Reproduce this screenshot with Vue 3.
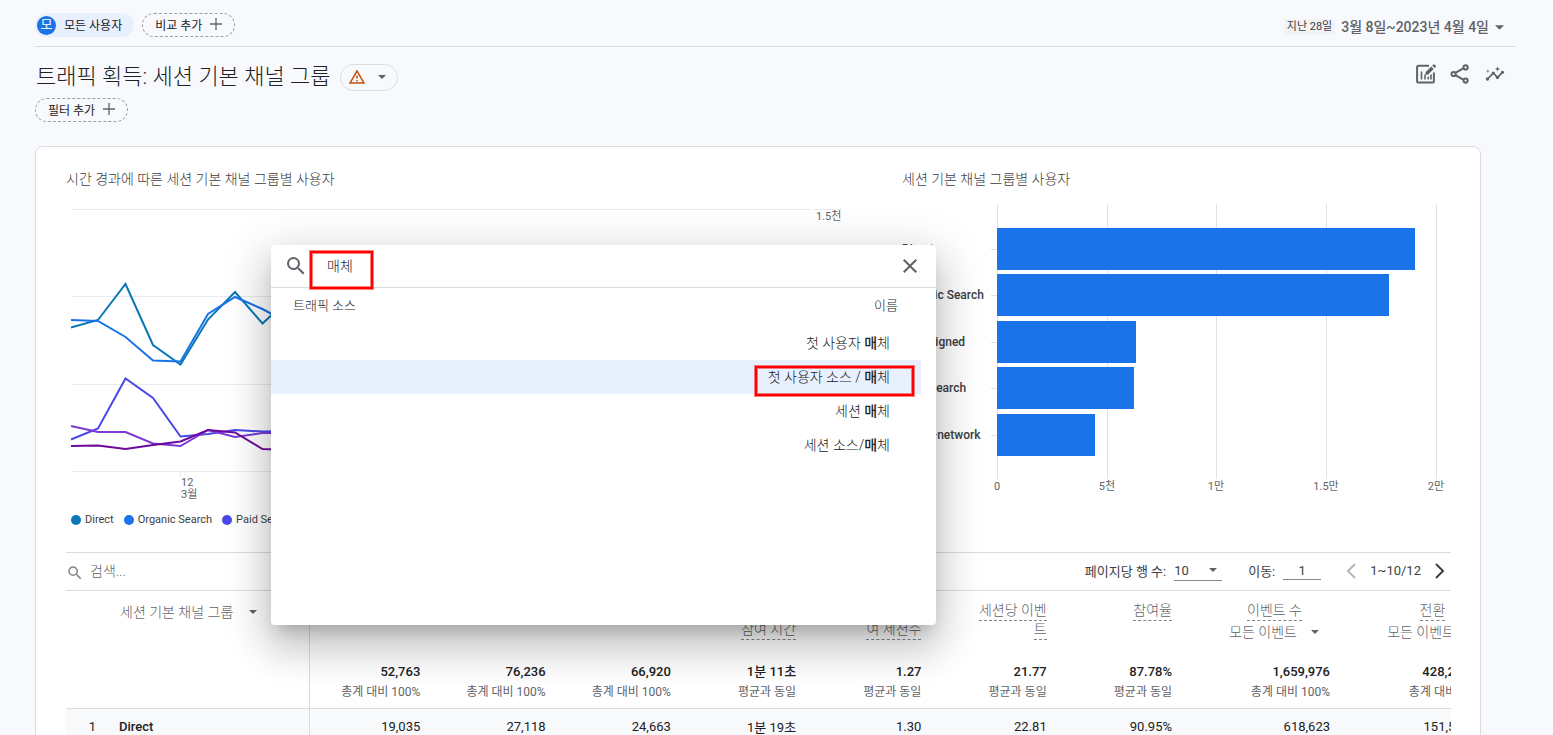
<script setup>
import { ref } from 'vue'

const query = ref('매체')
const tableQuery = ref('')
const goTo = ref('1')
const pageSize = ref('10')

const series = [
  { color: '#0b78b5', points: '5,123.5 32,116 59.5,80 87,141 114.5,160.5 142,115.5 169,88 196.5,119.5 224,94' },
  { color: '#1a73e8', points: '5,116 32,117 59.5,133 87,156.5 114.5,157.5 142,110 169,93 196.5,105 224,120' },
  { color: '#4a48e8', points: '5,235.5 32,224.5 59.5,174.5 87,194 114.5,232.5 142,230 169,226 196.5,227.5 224,227' },
  { color: '#7b3ad6', points: '5,222 32,228 59.5,228 87,239.5 114.5,242 142,226 169,233 196.5,229 224,229' },
  { color: '#6c0a9c', points: '5,242 32,241.5 59.5,245 87,241 114.5,237.5 142,226 169,228.5 196.5,245 224,246' },
]
const legend = [
  { name: 'Direct', color: '#0b78b5' },
  { name: 'Organic Search', color: '#1a73e8' },
  { name: 'Paid Search', color: '#4a48e8' },
]
const bars = [
  { name: 'Direct', y: 24, w: 418 },
  { name: 'Organic Search', y: 70, w: 392 },
  { name: 'Unassigned', y: 117, w: 139 },
  { name: 'Paid Search', y: 163, w: 137 },
  { name: 'Cross-network', y: 210, w: 98 },
]
const ticks = [
  { x: 95, label: '0' },
  { x: 205, label: '5천' },
  { x: 314, label: '1만' },
  { x: 424, label: '1.5만' },
  { x: 534, label: '2만' },
]
const columns = [
  { head: ['사용자'], total: '52,763', note: '총계 대비 100%', first: '19,035' },
  { head: ['세션수'], total: '76,236', note: '총계 대비 100%', first: '27,118' },
  { head: ['참여 세션수'], total: '66,920', note: '총계 대비 100%', first: '24,663' },
  { head: ['세션당 평균', '참여 시간'], total: '1분 11초', note: '평균과 동일', first: '1분 19초' },
  { head: ['사용자당 참', '여 세션수'], total: '1.27', note: '평균과 동일', first: '1.30' },
  { head: ['세션당 이벤', '트'], total: '21.77', note: '평균과 동일', first: '22.81' },
  { head: ['참여율'], total: '87.78%', note: '평균과 동일', first: '90.95%' },
  { head: ['이벤트 수'], filter: true, total: '1,659,976', note: '총계 대비 100%', first: '618,623' },
  { head: ['전환'], filter: true, total: '428,276.00', note: '총계 대비 100%', first: '151,561.00' },
]
const results = [
  { text: '첫 사용자 ' },
  { text: '첫 사용자 소스 / ', active: true },
  { text: '세션 ' },
  { text: '세션 소스/' },
]
</script>

<template>
  <div class="page">
    <header class="topbar">
      <button class="chip all"><span class="avatar">모</span>모든 사용자</button>
      <button class="chip dashed">비교 추가
        <svg class="plus" viewBox="0 0 12 12"><path d="M6 0v12M0 6h12" /></svg>
      </button>
      <button class="date">
        <span class="badge">지난 28일</span>
        <span class="range">3월 8일~2023년 4월 4일</span>
        <svg class="caret" viewBox="0 0 10 5"><path d="M0 0h10L5 5z" /></svg>
      </button>
    </header>

    <div class="heading">
      <h1>트래픽 획득: 세션 기본 채널 그룹</h1>
      <button class="warn" aria-label="데이터 품질">
        <svg class="tri" viewBox="0 0 24 24"><path d="M12 5.99 19.53 19H4.47L12 5.99M12 2 1 21h22L12 2zm1 14h-2v2h2v-2zm0-6h-2v4h2v-4z" /></svg>
        <svg class="caret" viewBox="0 0 10 5"><path d="M0 0h10L5 5z" /></svg>
      </button>
      <div class="actions">
        <button aria-label="맞춤설정">
          <svg viewBox="0 0 20 20"><path d="M13 1.8H2.2A1.1 1.1 0 0 0 1.1 3v14.500a1.100 1.100 0 0 0 1.100 1.100h14.600a1.100 1.100 0 0 0 1.100-1.100V8.500" class="s" /><path d="M5.500 7.500v8M9 10.500v5M12.300 12.500v3M15 10.500v5" class="s thin" /><path d="M9.500 10.700V8.300L15.300 2.500l2.400 2.400-5.800 5.800zM16.200 1.600l1.200-1.200c.3-.3.700-.3 1 0l1.400 1.400c.3.300.3.700 0 1l-1.200 1.200z" /></svg>
        </button>
        <button aria-label="공유">
          <svg viewBox="0 0 20 20"><path d="M5 9.200 13.200 4.400M5 10.900l8.200 4.800" class="s" /><circle cx="3.600" cy="10" r="2.100" class="s" /><circle cx="15.600" cy="3.400" r="2.100" class="s" /><circle cx="15.600" cy="16.600" r="2.100" class="s" /></svg>
        </button>
        <button aria-label="통계">
          <svg class="wide" viewBox="0 0 24 24"><path d="M21 8c-1.450 0-2.260 1.440-1.930 2.510l-3.550 3.560c-.3-.09-.74-.09-1.040 0l-2.550-2.550C12.270 10.450 11.460 9 10 9c-1.450 0-2.270 1.440-1.930 2.520l-4.560 4.550C2.440 15.740 1 16.550 1 18c0 1.100.9 2 2 2 1.450 0 2.260-1.440 1.930-2.510l4.550-4.560c.3.090.74.090 1.040 0l2.550 2.550C12.730 16.550 13.540 18 15 18c1.450 0 2.270-1.440 1.930-2.520l3.560-3.550C21.560 12.260 23 11.450 23 10c0-1.100-.9-2-2-2zM15 9l.94-2.070L18 6l-2.060-.93L15 3l-.92 2.070L12 6l2.080.93zM3.500 11 4 9l2-.5L4 8l-.5-2L3 8l-2 .5L3 9z" /></svg>
        </button>
      </div>
    </div>
    <div class="filters">
      <button class="chip dashed">필터 추가
        <svg class="plus" viewBox="0 0 12 12"><path d="M6 0v12M0 6h12" /></svg>
      </button>
    </div>

    <main class="card">
      <section class="charts">
        <div>
          <h2>시간 경과에 따른 세션 기본 채널 그룹별 사용자</h2>
          <svg class="chart" viewBox="0 0 836 300">
            <path class="grid" d="M5 5.500H744M748 5.500h28M5 92.500H744M5 180.500H744M5 267.500H744M114.500 267v6" />
            <polyline v-for="s in series" :key="s.color" :points="s.points" :stroke="s.color" class="line" />
            <text x="750" y="16" class="axis">1.5천</text>
            <text x="115" y="282" class="axis">12</text>
            <text x="115" y="294" class="axis">3월</text>
          </svg>
          <ul class="legend">
            <li v-for="l in legend" :key="l.name">
              <svg viewBox="0 0 10 10"><circle cx="5" cy="5" r="5" :fill="l.color" /></svg>{{ l.name }}
            </li>
          </ul>
        </div>
        <div>
          <h2>세션 기본 채널 그룹별 사용자</h2>
          <svg class="chart" viewBox="0 0 549 300">
            <path v-for="t in ticks" :key="t.x" class="grid dark" :d="`M${t.x + 0.5} 0V275`" />
            <g v-for="b in bars" :key="b.name">
              <path class="grid dark" :d="`M89 ${b.y + 21.5}h6`" />
              <rect x="95" :y="b.y" :width="b.w" height="42" fill="#1a73e8" />
              <text x="0" :y="b.y + 25" class="cat">{{ b.name }}</text>
            </g>
            <text v-for="t in ticks" :key="t.label" :x="t.x" y="286" class="axis mid">{{ t.label }}</text>
          </svg>
        </div>
      </section>

      <div class="toolbar">
        <label class="find">
          <svg viewBox="0 0 24 24"><path d="M15.500 14h-.79l-.28-.27A6.471 6.471 0 0 0 16 9.500 6.500 6.500 0 1 0 9.500 16c1.610 0 3.090-.59 4.230-1.570l.27.28v.79l5 4.990L20.490 19l-4.990-5zm-6 0C7.010 14 5 11.990 5 9.500S7.010 5 9.500 5 14 7.010 14 9.500 11.990 14 9.500 14z" /></svg>
          <input v-model="tableQuery" placeholder="검색..." aria-label="검색" />
        </label>
        <label class="size">페이지당 행 수:
          <span class="pick">
            <select v-model="pageSize"><option>10</option><option>25</option></select>
            <svg class="caret" viewBox="0 0 10 5"><path d="M0 0h10L5 5z" /></svg>
          </span>
        </label>
        <label class="goto">이동: <input v-model="goTo" /></label>
        <div class="pager">
          <button class="off" aria-label="이전"><svg viewBox="0 0 10 16"><path d="M9 1 2 8l7 7" /></svg></button>
          <span>1~10/12</span>
          <button aria-label="다음"><svg viewBox="0 0 10 16"><path d="m1 1 7 7-7 7" /></svg></button>
        </div>
      </div>

      <div class="scroller">
        <table>
          <colgroup><col class="c-dim" /><col v-for="n in 7" :key="n" /><col class="c-wide" /><col class="c-wide" /></colgroup>
          <thead>
            <tr>
              <th class="dim">
                <button class="dimbtn">세션 기본 채널 그룹 <svg class="caret" viewBox="0 0 10 5"><path d="M0 0h10L5 5z" /></svg></button>
              </th>
              <th v-for="c in columns" :key="c.total" :class="{ filtered: c.filter }">
                <div v-for="h in c.head" :key="h" class="hline"><span>{{ h }}</span></div>
                <button v-if="c.filter" class="evt">모든 이벤트 <svg class="caret" viewBox="0 0 10 5"><path d="M0 0h10L5 5z" /></svg></button>
              </th>
            </tr>
          </thead>
          <tbody>
            <tr class="totals">
              <td class="dim"></td>
              <td v-for="c in columns" :key="c.total"><strong>{{ c.total }}</strong><small>{{ c.note }}</small></td>
            </tr>
            <tr class="row">
              <td class="dim"><span class="idx">1</span><b>Direct</b></td>
              <td v-for="c in columns" :key="c.total">{{ c.first }}</td>
            </tr>
          </tbody>
        </table>
      </div>
    </main>

    <div class="dialog" role="dialog" aria-label="측정기준 선택">
      <div class="dsearch">
        <svg viewBox="0 0 24 24"><path d="M15.500 14h-.79l-.28-.27A6.471 6.471 0 0 0 16 9.500 6.500 6.500 0 1 0 9.500 16c1.610 0 3.090-.59 4.230-1.570l.27.28v.79l5 4.990L20.490 19l-4.990-5zm-6 0C7.010 14 5 11.990 5 9.500S7.010 5 9.500 5 14 7.010 14 9.500 11.990 14 9.500 14z" /></svg>
        <input v-model="query" aria-label="항목 검색" />
        <button aria-label="닫기"><svg viewBox="0 0 24 24"><path d="M19 6.410 17.590 5 12 10.590 6.410 5 5 6.410 10.590 12 5 17.590 6.410 19 12 13.410 17.590 19 19 17.590 13.410 12z" /></svg></button>
      </div>
      <div class="dhead"><span>트래픽 소스</span><span>이름</span></div>
      <ul class="results">
        <li v-for="r in results" :key="r.text">
          <button :class="{ active: r.active }">{{ r.text }}<b>매</b>체</button>
        </li>
      </ul>
      <span class="mark mark-query"></span>
      <span class="mark mark-item"></span>
    </div>
  </div>
</template>

<style>
html, body { height: 100%; overflow: hidden; background: #f8f9fc; }
</style>

<style scoped>
.page {
  position: relative;
  height: 100vh;
  overflow: hidden;
  background: #f8f9fc;
  color: #202124;
  font-family: Roboto, "Noto Sans CJK KR", sans-serif;
  font-size: 14px;
  box-sizing: border-box;
}
button, input, select { font: inherit; color: inherit; border: 0; padding: 0; margin: 0; background: none; outline: 0; }
button { cursor: pointer; }
ul { list-style: none; margin: 0; padding: 0; }
svg { display: block; flex: none; }
.caret { width: 8px; height: 4px; fill: #5f6368; }

.topbar {
  display: flex;
  align-items: center;
  gap: 8px;
  height: 46px;
  margin: 0 37px 0 35px;
  border-bottom: 1px solid #dadce0;
}
.chip {
  display: flex;
  align-items: center;
  box-sizing: border-box;
  height: 24px;
  margin-top: 4px;
  border-radius: 12px;
  font-size: 12px;
}
.all { gap: 8px; padding: 0 12px 2px 2px; background: #e8f0fe; }
.avatar {
  width: 19px;
  height: 19px;
  margin-top: 2px;
  border-radius: 50%;
  background: #1a73e8;
  color: #fff;
  font-size: 13px;
  line-height: 18px;
  text-align: center;
}
.dashed { gap: 8px; padding: 0 12px 2px; border: 1px dashed #9aa0a6; }
.plus { width: 12px; height: 12px; stroke: #5f6368; stroke-width: 1.3; fill: none; }
.date { display: flex; align-items: center; gap: 6px; margin: 8px 12px 0 auto; color: #5f6368; }
.date .caret { width: 9px; height: 5px; }
.badge { padding: 0 3px; background: #f1f3f4; color: #3c4043; font-size: 11px; line-height: 16px; }
.range { font-weight: 500; line-height: 20px; }

.heading { display: flex; align-items: center; height: 30px; margin: 15px 47px 0 36px; }
h1 { margin: 0; font-size: 22px; font-weight: 300; line-height: 30px; }
.warn {
  display: flex;
  align-items: center;
  gap: 12px;
  box-sizing: border-box;
  height: 27px;
  margin-left: 9px;
  padding: 0 11px 0 7px;
  border: 1px solid #dadce0;
  border-radius: 14px;
}
.tri { width: 18px; height: 18px; fill: #c5500a; }
.actions { display: flex; gap: 14px; margin-left: auto; margin-top: -7px; }
.actions svg { width: 20px; height: 20px; fill: #5f6368; }
.actions svg.wide { width: 22px; height: 20px; }
.actions .s { fill: none; stroke: #5f6368; stroke-width: 2; }
.actions .thin { stroke-width: 1.6; }
.filters { display: flex; margin: 2px 35px 0; }

.card {
  margin: 24px 72px 0 35px;
  padding: 22px 29px 0 30px;
  border: 1px solid #dadce0;
  border-radius: 8px;
  background: #fff;
}
.charts { display: grid; grid-template-columns: 836fr 549fr; height: 383px; }
h2 { margin: 0 0 15px; color: #3c4043; font-size: 14px; font-weight: 300; line-height: 20px; }
.chart { width: 100%; }
.grid { stroke: #e8eaed; stroke-width: 1; fill: none; }
.grid.dark { stroke: #dfe1e3; }
.line { fill: none; stroke-width: 2; }
.axis { fill: #5f6368; font-size: 11px; }
.mid { text-anchor: middle; }
.cat { fill: #3c4043; font-size: 12px; font-weight: 500; }
.legend { display: flex; gap: 10px; padding: 6px 0 0 5px; color: #3c4043; font-size: 11px; line-height: 20px; }
.legend li { display: flex; align-items: center; gap: 4px; }
.legend svg { width: 10px; height: 10px; }

.toolbar {
  display: flex;
  align-items: center;
  height: 35px;
  padding-bottom: 2px;
  border-top: 1px solid #dadce0;
  border-bottom: 1px solid #dadce0;
  color: #3c4043;
  font-size: 13px;
}
.find { display: flex; align-items: center; gap: 6px; margin-right: auto; }
.find svg { width: 18px; height: 18px; margin-top: 4px; fill: #80868b; }
.find input { width: 140px; font-size: 14px; font-weight: 300; }
.find input::placeholder { color: #5f6368; opacity: 1; }
.size, .goto { display: flex; align-items: center; gap: 8px; white-space: nowrap; }
.pick { display: flex; align-items: center; width: 48px; height: 19px; border-bottom: 1px solid #80868b; }
.pick select { appearance: none; flex: 1; min-width: 0; }
.pick .caret { margin-right: 5px; }
.goto { margin-left: 26px; }
.goto input { width: 38px; height: 18px; border-bottom: 1px solid #80868b; text-align: center; }
.pager { display: flex; align-items: center; gap: 14px; margin: 0 6px 0 25px; }
.pager svg { width: 10px; height: 16px; fill: none; stroke: #3c4043; stroke-width: 2; }
.pager .off svg { stroke: #b5b8bb; }

.scroller { overflow: hidden; }
table { table-layout: fixed; width: calc(100% + 52px); border-collapse: separate; border-spacing: 0; }
.c-dim { width: 244px; }
.c-wide { width: 158px; }
th { height: 53px; padding: 10px 15px 0; vertical-align: top; text-align: right; color: #5f6368; font-weight: 300; white-space: nowrap; }
td { padding: 0 15px; text-align: right; font-size: 13px; white-space: nowrap; }
.dim { border-right: 1px solid #dadce0; text-align: left; }
th.dim { padding-left: 54px; padding-top: 11px; }
.dimbtn, .evt { display: inline-flex; align-items: center; gap: 16px; line-height: 20px; }
.hline { height: 19px; line-height: 19px; }
.hline span { display: inline-block; height: 19px; border-bottom: 1px dashed #80868b; }
.filtered { padding-right: 26px; padding-left: 0; text-align: center; }
.filtered .hline { padding-left: 43px; }
.filtered .evt { float: right; gap: 14px; margin-top: 2px; }
.totals td { height: 53px; vertical-align: top; border-bottom: 1px solid #dadce0; }
strong { display: block; padding-top: 7px; font-weight: 500; line-height: 20px; }
small { display: block; color: #5f6368; font-size: 12px; line-height: 20px; }
.row td { height: 34px; background: #f8f9fb; }
td.dim { padding-left: 8px; }
.idx { display: inline-block; width: 30px; padding-left: 7px; margin-right: 15px; text-align: center; box-sizing: border-box; }
.row b { font-weight: 500; }

.dialog {
  position: absolute;
  left: 271px;
  top: 245px;
  width: 665px;
  height: 380px;
  border-radius: 4px;
  background: #fff;
  box-shadow: 0 11px 15px -7px rgba(0, 0, 0, .2), 0 24px 38px 3px rgba(0, 0, 0, .14), 0 9px 46px 8px rgba(0, 0, 0, .12);
}
.dsearch { display: flex; align-items: center; height: 42px; padding: 0 14px 0 13px; border-bottom: 1px solid #dadce0; }
.dsearch svg { width: 24px; height: 24px; fill: #5f6368; }
.dsearch input { flex: 1; min-width: 0; margin-left: 19px; padding-bottom: 2px; font-weight: 300; }
.dhead { display: flex; justify-content: space-between; padding: 7px 38px 0 22px; font-size: 13px; font-weight: 300; line-height: 22px; }
.results { padding-top: 9px; }
.results button { display: block; width: 650px; height: 34px; padding: 0 31px 3px 0; text-align: right; font-weight: 300; }
.results .active { background: #e8f0fe; }
.results b { font-weight: 500; }
.mark { position: absolute; border: 2px solid #f00; box-shadow: 0 0 0 1px rgba(255, 0, 0, .5), inset 0 0 0 1px rgba(255, 0, 0, .5); box-sizing: border-box; pointer-events: none; }
.mark-query { left: 39px; top: 6px; width: 63px; height: 38px; }
.mark-item { left: 484px; top: 121px; width: 159px; height: 30px; }
</style>
